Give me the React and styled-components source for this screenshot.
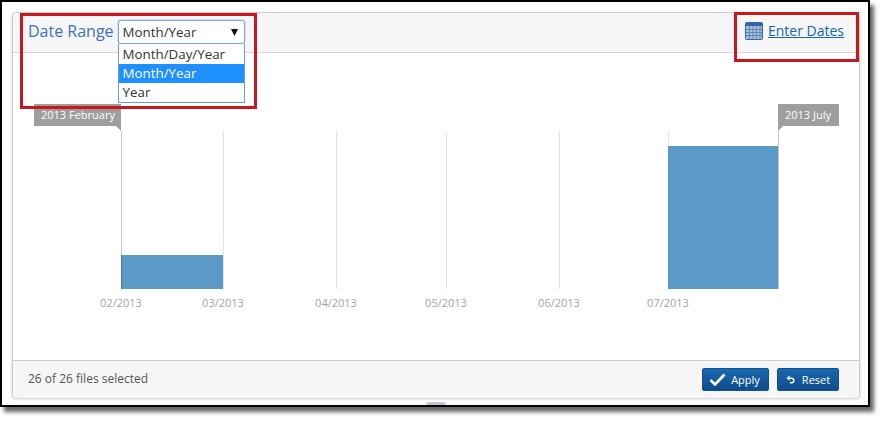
import React from "react";
import styled, { createGlobalStyle } from "styled-components";

const Global = createGlobalStyle`
  html, body { margin: 0; padding: 0; background: #fff; }
  body { font-family: "Open Sans", "Liberation Sans", sans-serif; width: 884px; height: 422px; overflow: hidden; }
  * { box-sizing: border-box; }
`;

const Frame = styled.div`
  position: relative;
  width: 870px;
  height: 407px;
  border: 2px solid #000;
  background: #fff;
  padding: 10px 8px 8px 10px;
  box-shadow: 4px 5px 4px rgba(0, 0, 0, 0.6);
`;

const Panel = styled.div`
  width: 848px;
  height: 385px;
  border: 1px solid #ccc;
  border-radius: 4px;
  display: flex;
  flex-direction: column;
  box-shadow: 0 2px 3px rgba(0, 0, 0, 0.22);
  background: #fff;
`;

const Header = styled.div`
  height: 40px;
  flex: none;
  background: #f6f6f6;
  border-bottom: 1px solid #d6d6d6;
  border-radius: 4px 4px 0 0;
  display: flex;
  align-items: flex-start;
  justify-content: space-between;
  padding: 7px 15px 0 15px;
`;

const RangeGroup = styled.div`
  display: flex;
  align-items: flex-start;
  gap: 4px;
`;

const RangeLabel = styled.span`
  font-size: 16px;
  line-height: 22px;
  color: #3c73bb;
`;

const SelectWrap = styled.div`
  position: relative;
  width: 127px;
  z-index: 2;
`;

const SelectBox = styled.div`
  height: 24px;
  background: #fff;
  border: 1px solid #7da2e0;
  border-radius: 3px;
  box-shadow: 0 0 2px #8db0ea;
  font-size: 13.33px;
  line-height: 23px;
  padding-left: 4px;
  color: #333;
  display: flex;
  align-items: center;
  justify-content: space-between;
`;

const Caret = styled.svg`
  width: 7px;
  height: 7px;
  margin-right: 6px;
  fill: #111;
`;

const OptionList = styled.div`
  position: absolute;
  left: 0;
  top: 24px;
  width: 127px;
  background: #fff;
  border: 1px solid #7097d6;
  border-top: none;
  padding-top: 1px;
`;

const Option = styled.div`
  height: 19px;
  line-height: 19px;
  font-size: 13.33px;
  padding-left: 4px;
  color: ${(p) => (p.$selected ? "#fff" : "#333")};
  background: ${(p) => (p.$selected ? "#1e90ff" : "#fff")};
`;

const EnterLink = styled.a`
  display: flex;
  align-items: center;
  gap: 5px;
  font-size: 14px;
  line-height: 20px;
  color: #1268ab;
  margin-top: 1px;
  span { text-decoration: underline; }
`;

const Chart = styled.div`
  position: relative;
  flex: 1;
`;

const ChartSvg = styled.svg`
  display: block;
  width: 846px;
  height: 307px;
  text {
    font-family: "Open Sans", "Liberation Sans", sans-serif;
    font-size: 11px;
    fill: #a3a3a3;
    text-anchor: middle;
  }
`;

const Flag = styled.div`
  position: absolute;
  top: 51px;
  height: 22px;
  width: ${(p) => (p.$side === "left" ? 87 : 61)}px;
  line-height: 22px;
  padding-left: 7px;
  background: #9e9e9e;
  color: #fff;
  font-size: 11px;
  font-weight: 500;
  white-space: nowrap;
  ${(p) => (p.$side === "left" ? "left: 21px;" : "left: 765px;")}
  &::after {
    content: "";
    position: absolute;
    top: 22px;
    width: 0;
    height: 0;
    border-top: 5px solid #9e9e9e;
    ${(p) =>
      p.$side === "left"
        ? "right: 0; border-left: 5px solid transparent;"
        : "left: 0; border-right: 5px solid transparent;"}
  }
`;

const Footer = styled.div`
  height: 38px;
  flex: none;
  background: #f6f6f6;
  border-top: 1px solid #cfcfcf;
  border-radius: 0 0 4px 4px;
  display: flex;
  align-items: center;
  justify-content: space-between;
  padding: 0 20px 0 15px;
`;

const Status = styled.span`
  font-size: 12px;
  color: #555;
  margin-top: -2px;
`;

const Buttons = styled.div`
  display: flex;
  gap: 8px;
`;

const Button = styled.button`
  height: 23px;
  width: ${(p) => p.$w}px;
  border: 1px solid #0f4f92;
  border-radius: 2px;
  background: linear-gradient(#1a69ae, #0f4b8c);
  color: #fff;
  font-family: inherit;
  font-size: 11px;
  font-weight: 500;
  padding: 0 ${(p) => p.$pr}px 0 0;
  display: flex;
  align-items: center;
  justify-content: center;
  gap: ${(p) => p.$gap}px;
`;

const Handle = styled.div`
  position: absolute;
  left: 424px;
  bottom: 0;
  width: 20px;
  height: 3px;
  background: #c2c6cc;
  border-radius: 3px 3px 0 0;
`;

const Callout = styled.div`
  position: absolute;
  border: 3px solid #c8171e;
  pointer-events: none;
  z-index: 3;
  left: ${(p) => p.$l}px;
  top: ${(p) => p.$t}px;
  width: ${(p) => p.$w}px;
  height: ${(p) => p.$h}px;
`;

const lines = [121, 223, 336, 446, 559, 668, 778];
const ticks = [
  [121, "02/2013"],
  [223, "03/2013"],
  [336, "04/2013"],
  [446, "05/2013"],
  [559, "06/2013"],
  [668, "07/2013"],
];
const ox = 13;
const oy = 53;

function CalendarIcon() {
  return (
    <svg width="18" height="18" viewBox="0 0 18 18">
      <rect x="0" y="0" width="18" height="18" rx="2" fill="#2f68a6" />
      <rect x="1" y="4" width="16" height="13" fill="#a9bfdc" />
      <path
        d="M4.5 4v13M8 4v13M11.5 4v13M15 4v13M1 7.5h16M1 10.5h16M1 13.5h16"
        stroke="#5f86b8"
        strokeWidth="1"
        fill="none"
      />
    </svg>
  );
}

export default function App() {
  return (
    <>
      <Global />
      <Frame>
        <Panel>
          <Header>
            <RangeGroup>
              <RangeLabel>Date Range</RangeLabel>
              <SelectWrap>
                <SelectBox>
                  Month/Year
                  <Caret viewBox="0 0 7 7">
                    <path d="M0 0h7L3.5 7z" />
                  </Caret>
                </SelectBox>
                <OptionList>
                  <Option>Month/Day/Year</Option>
                  <Option $selected>Month/Year</Option>
                  <Option>Year</Option>
                </OptionList>
              </SelectWrap>
            </RangeGroup>
            <EnterLink>
              <CalendarIcon />
              <span>Enter Dates</span>
            </EnterLink>
          </Header>
          <Chart>
            <ChartSvg viewBox={`${ox} ${oy} 846 307`}>
              {lines.map((x, i) => (
                <line
                  key={x}
                  x1={x + 0.5}
                  x2={x + 0.5}
                  y1="131"
                  y2="289"
                  stroke={i === 0 || i === 6 ? "#c9c9c9" : "#e4e4e4"}
                />
              ))}
              <rect x="121" y="255" width="102" height="34" fill="#5b9ac7" />
              <rect x="121" y="255" width="1" height="34" fill="#4a7594" />
              <rect x="668" y="146" width="110" height="143" fill="#5b9ac7" />
              {ticks.map(([x, t]) => (
                <text key={t} x={x} y="307">
                  {t}
                </text>
              ))}
            </ChartSvg>
            <Flag $side="left">2013 February</Flag>
            <Flag $side="right">2013 July</Flag>
          </Chart>
          <Footer>
            <Status>26 of 26 files selected</Status>
            <Buttons>
              <Button $w={67} $gap={5} $pr={2}>
                <svg width="17" height="13" viewBox="0 0 17 13">
                  <path d="M1.5 7l4.5 4.5L15.5 1.5" stroke="#fff" strokeWidth="2.6" fill="none" />
                </svg>
                Apply
              </Button>
              <Button $w={62} $gap={7} $pr={0}>
                <svg width="9" height="9" viewBox="0 0 9 9">
                  <path d="M1.5 3.2H5.5a2.3 2.3 0 0 1 0 4.6H4" stroke="#fff" strokeWidth="1.5" fill="none" />
                  <path d="M3.6 0.4v5.4L0.4 3.2z" fill="#fff" />
                </svg>
                Reset
              </Button>
            </Buttons>
          </Footer>
        </Panel>
        <Handle />
        <Callout $l={18} $t={11} $w={237} $h={96} />
        <Callout $l={732} $t={10} $w={125} $h={50} />
      </Frame>
    </>
  );
}
